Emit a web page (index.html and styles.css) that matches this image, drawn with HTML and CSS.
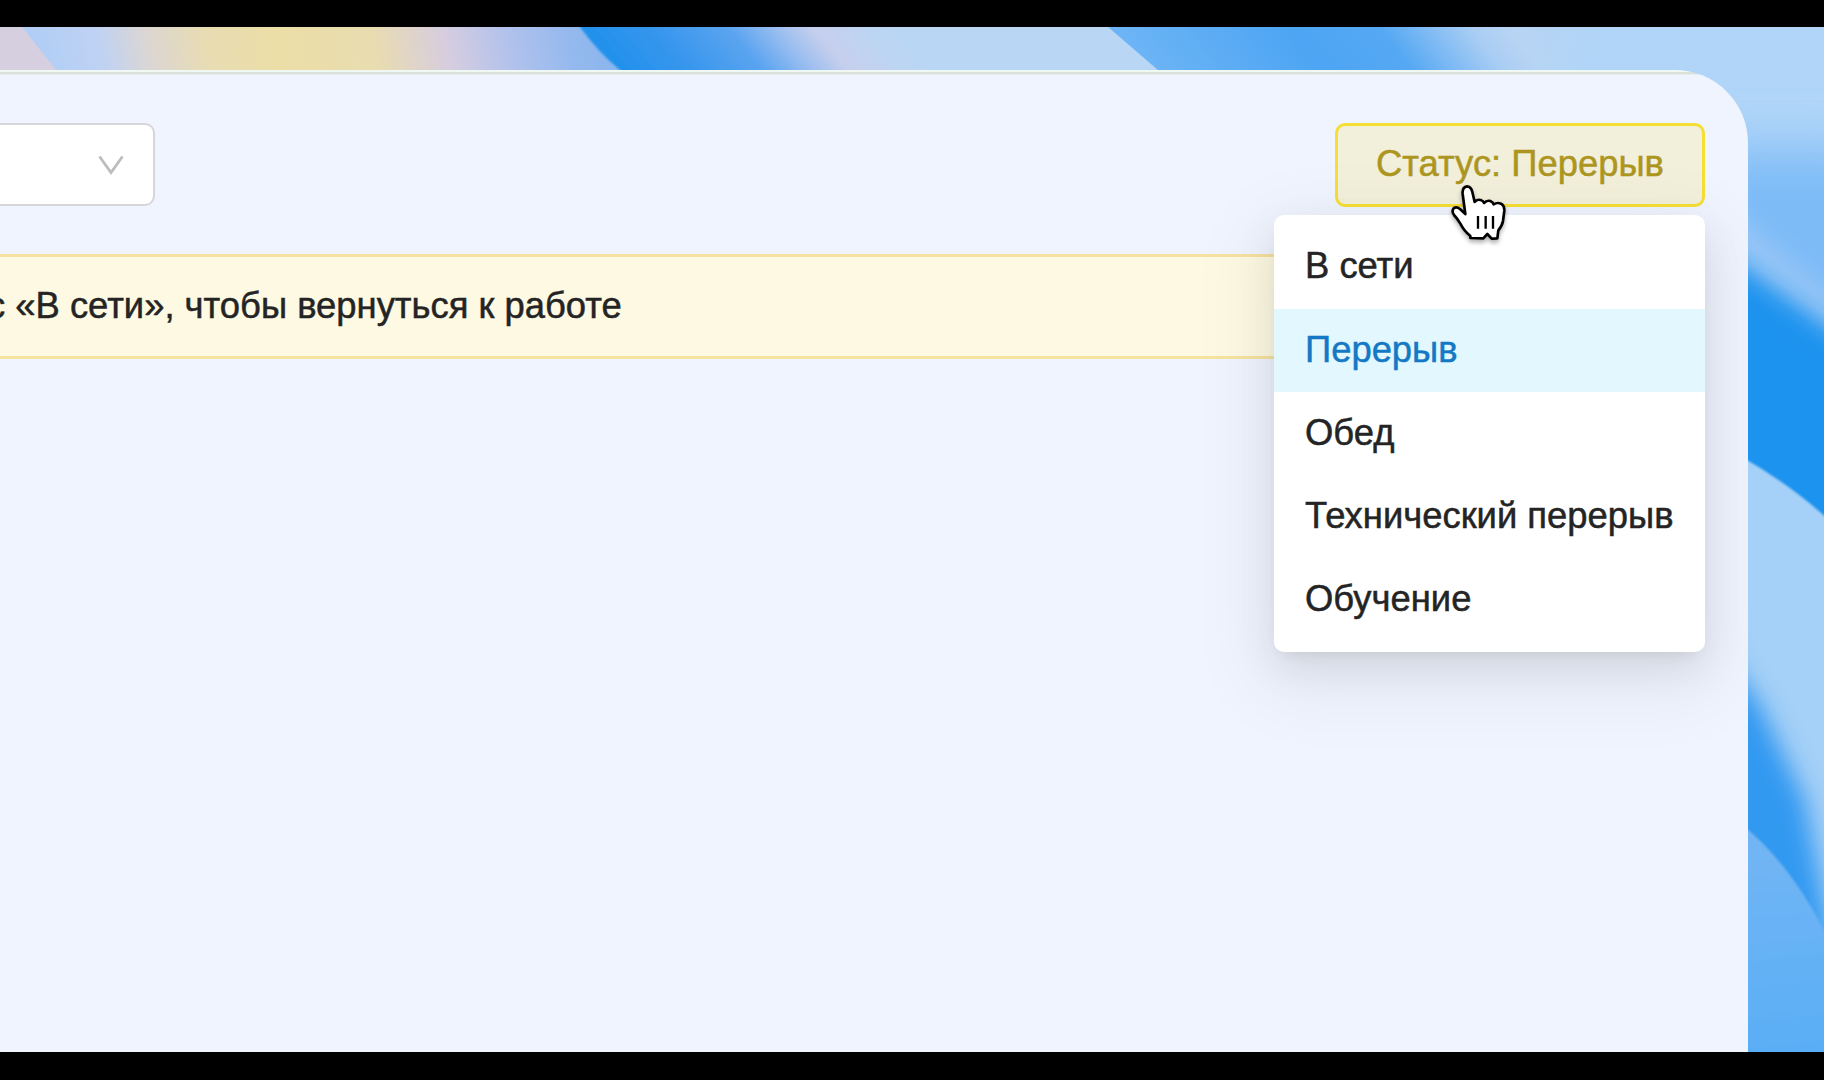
FILE: index.html
```html
<!DOCTYPE html>
<html lang="ru">
<head>
    <meta charset="utf-8">
    <meta name="viewport" content="width=device-width, initial-scale=1.0">
    <title>Статус оператора</title>
    <link rel="stylesheet" href="styles.css">
</head>
<body>
    <div class="desktop">
        <svg class="wallpaper" viewBox="0 27 1824 1025" preserveAspectRatio="none" aria-hidden="true">
            <defs>
                <linearGradient id="sand" gradientUnits="userSpaceOnUse" x1="22" y1="50" x2="610" y2="-60">
                    <stop offset="0" stop-color="#aecdf6"/>
                    <stop offset="0.13" stop-color="#bfd2f3"/>
                    <stop offset="0.21" stop-color="#dcd6d2"/>
                    <stop offset="0.3" stop-color="#e8dcb4"/>
                    <stop offset="0.42" stop-color="#ebdea6"/>
                    <stop offset="0.58" stop-color="#e9dcb0"/>
                    <stop offset="0.7" stop-color="#d6cde0"/>
                    <stop offset="0.8" stop-color="#b2c2ec"/>
                    <stop offset="0.9" stop-color="#95b9ee"/>
                    <stop offset="1" stop-color="#86b4ee"/>
                </linearGradient>
                <linearGradient id="wave" gradientUnits="userSpaceOnUse" x1="600" y1="60" x2="790" y2="-100">
                    <stop offset="0" stop-color="#1e90ec"/>
                    <stop offset="0.25" stop-color="#3796ed"/>
                    <stop offset="0.48" stop-color="#5ba4f0"/>
                    <stop offset="0.63" stop-color="#9dbff0"/>
                    <stop offset="0.74" stop-color="#c6cfed"/>
                    <stop offset="0.9" stop-color="#bcd5f3"/>
                    <stop offset="1" stop-color="#b9d6f4"/>
                </linearGradient>
                <linearGradient id="sky" gradientUnits="userSpaceOnUse" x1="1150" y1="70" x2="1450" y2="-160">
                    <stop offset="0" stop-color="#6cb4f5"/>
                    <stop offset="0.36" stop-color="#4da5f3"/>
                    <stop offset="0.55" stop-color="#55a8f3"/>
                    <stop offset="0.74" stop-color="#a9cdf4"/>
                    <stop offset="0.82" stop-color="#b8d4f3"/>
                    <stop offset="1" stop-color="#b3d4f6"/>
                </linearGradient>
                <linearGradient id="low" gradientUnits="userSpaceOnUse" x1="1748" y1="830" x2="1770" y2="1052">
                    <stop offset="0" stop-color="#74b6f4"/>
                    <stop offset="1" stop-color="#5aaef5"/>
                </linearGradient>
                <filter id="soft" x="-50%" y="-50%" width="200%" height="200%">
                    <feGaussianBlur stdDeviation="12"/>
                </filter>
                <filter id="haze" x="-100%" y="-50%" width="300%" height="200%">
                    <feGaussianBlur stdDeviation="26"/>
                </filter>
                <filter id="edge" x="-10%" y="-10%" width="120%" height="120%">
                    <feGaussianBlur stdDeviation="0.8"/>
                </filter>
            </defs>
            <rect x="0" y="27" width="1824" height="1025" fill="#b0d4f8"/>

            <!-- top strip, left to right -->
            <rect x="0" y="27" width="700" height="60" fill="url(#sand)"/>
            <path d="M0 27H22L57 71H0Z" fill="#d5cfe0"/>
            <path d="M580 20V27Q598 52 621 71L640 85H1170V20Z" fill="url(#wave)" filter="url(#edge)"/>
            <path d="M1100 20L1166 77H1600V20Z" fill="url(#sky)"/>
            <path d="M1560 20H1860V160H1560Z" fill="#b0d5f8" filter="url(#haze)"/>

            <!-- right strip, top to bottom -->
            <path d="M1700 150H1900V560H1700Z" fill="#7dbbf7" filter="url(#haze)"/>
            <path d="M1700 185L1900 355V400L1700 240Z" fill="#98c6f6" filter="url(#soft)"/>
            <path d="M1700 237L1900 378V560H1700Z" fill="#1d93ee" filter="url(#soft)"/>
            <path d="M1740 456Q1790 484 1830 521V1060H1740Z" fill="#a5d0f7" filter="url(#edge)"/>
            <path d="M1700 620L1760 705L1805 800L1830 930V1000H1700Z" fill="#3399f1" filter="url(#soft)"/>
            <path d="M1740 823Q1792 864 1830 942V1060H1740Z" fill="url(#low)" filter="url(#edge)"/>
        </svg>

        <main class="panel">
            <div class="toolbar">
                <div class="select">
                    <svg class="select-arrow" viewBox="0 0 26 20" aria-hidden="true">
                        <path d="M1.5 1.5L13 17.500L24.500 1.500"/>
                    </svg>
                </div>
                <div class="status">
                    <button class="status-button" type="button" aria-haspopup="menu" aria-expanded="true">Статус: Перерыв</button>
                    <ul class="menu">
                        <li class="menu-item">В сети</li>
                        <li class="menu-item menu-item-selected">Перерыв</li>
                        <li class="menu-item">Обед</li>
                        <li class="menu-item">Технический перерыв</li>
                        <li class="menu-item">Обучение</li>
                    </ul>
                    <svg class="cursor" viewBox="0 0 360 270" aria-hidden="true">
                        <path d="M151 204L151 198Q133 184 121 161Q113 147 102 135Q94 124 101 115Q109 108 120 117L136 132L128 72Q126 51 141 49Q153 49 157 66L164 96Q170 87 182 90Q190 92 192 99Q200 90 211 93Q219 96 221 103Q232 96 243 101Q254 107 253 122L249 153Q247 166 235 181L232 205L215 206L202 192L190 205Z"/>
                        <path class="cursor-lines" d="M174 138V176M197 138V176M219 138V176"/>
                    </svg>
                </div>
            </div>
            <div class="alert">
                <span class="alert-text">с «В сети», чтобы вернуться к работе</span>
            </div>
        </main>
    </div>
</body>
</html>
```

FILE: styles.css
```css
* {
    box-sizing: border-box;
}

body {
    margin: 0;
    padding: 27px 0 28px;
    height: 100vh;
    overflow: hidden;
    background: #000;
    color: #242424;
    font-family: "Liberation Sans", Arial, sans-serif;
    font-size: 36.4px;
    line-height: 57px;
    -webkit-text-stroke: 0.5px currentColor;
}

.desktop {
    position: relative;
    height: 100%;
    padding-top: 43px;
    overflow: hidden;
}

.wallpaper {
    position: absolute;
    top: 0;
    left: 0;
    width: 100%;
    height: 100%;
}

.panel {
    position: relative;
    width: 1748px;
    height: 100%;
    padding: 53px 43px 0 0;
    background: linear-gradient(#f0f8f4 2px, #dce2da 2px, #dce2da 4px, #f0f4fe 5px);
    border-top-right-radius: 73px;
    overflow: hidden;
}

.toolbar {
    display: flex;
    justify-content: space-between;
}

.select {
    display: flex;
    align-items: center;
    justify-content: flex-end;
    width: 155px;
    height: 83px;
    padding-right: 29px;
    background: #fff;
    border: 2px solid #d6d6d8;
    border-left: 0;
    border-radius: 0 10px 10px 0;
}

.select-arrow {
    width: 26px;
    height: 20px;
    fill: none;
    stroke: #bdbdbd;
    stroke-width: 2.8;
}

.status {
    position: relative;
}

.status-button {
    display: block;
    width: 370px;
    height: 84px;
    padding: 0 0 3px;
    background: #f2efdb;
    border: 3px solid #f5df35;
    border-radius: 10px;
    color: #ad961f;
    font: inherit;
    white-space: nowrap;
    cursor: pointer;
}

.menu {
    position: absolute;
    z-index: 1;
    top: 92px;
    right: 0;
    width: 431px;
    margin: 0;
    padding: 10.4px 0;
    list-style: none;
    background: #fff;
    border-radius: 10px;
    box-shadow: 0 8px 16px -10px rgba(0, 0, 0, 0.12), 0 16px 42px rgba(0, 0, 0, 0.08), 0 23px 73px 21px rgba(0, 0, 0, 0.05);
}

.menu-item {
    height: 83.2px;
    padding: 12px 31px;
    white-space: nowrap;
}

.menu-item-selected {
    background: #e2f7fe;
    color: #1479c4;
}

.cursor {
    position: absolute;
    z-index: 2;
    top: 47px;
    left: 85px;
    width: 120px;
    height: 90px;
    fill: #fff;
    stroke: #000;
    stroke-width: 8;
    stroke-linejoin: round;
    filter: drop-shadow(0 3px 2px rgba(0, 0, 0, 0.3));
}

.cursor-lines {
    stroke-width: 7;
}

.alert {
    display: flex;
    align-items: center;
    height: 105px;
    margin-top: 47px;
    padding-bottom: 2px;
    background: #fef9e2;
    border: 3px solid #f6e3a0;
    border-left: 0;
}

.alert-text {
    margin-left: -13px;
    white-space: nowrap;
}
```
